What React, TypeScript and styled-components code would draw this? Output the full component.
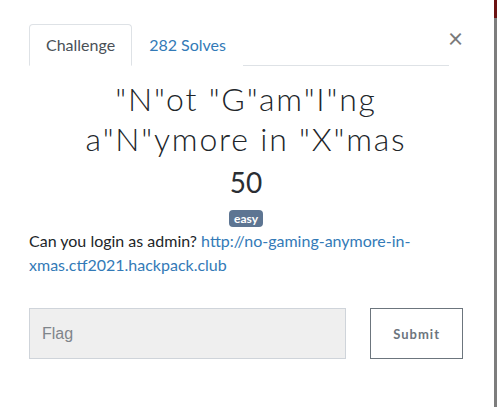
import React from "react";
import styled, { createGlobalStyle } from "styled-components";

const Global = createGlobalStyle`
  html, body { margin: 0; padding: 0; background: #fff; }
  body { font-family: Lato, "Noto Sans", sans-serif; color: #212529; }
  * { box-sizing: border-box; }
`;

const Page = styled.div`
  display: flex;
  height: 407px;
  overflow: hidden;
`;

const Main = styled.div`
  flex: 1;
  padding: 24px 0 0 29px;
`;

const Content = styled.div`
  width: 434px;
`;

const Scrollbar = styled.div`
  width: 3px;
  display: flex;
  flex-direction: column;
  background: #7d7d7d;
`;

const ScrollTop = styled.div`
  height: 18px;
  background: #6b1212;
`;

const Header = styled.div`
  display: flex;
  align-items: flex-start;
`;

const Tabs = styled.div`
  display: flex;
  width: 420px;
  border-bottom: 1px solid #dee2e6;
`;

const Tab = styled.a<{ $active?: boolean }>`
  display: block;
  padding: 8px 16px;
  font-size: 16px;
  line-height: 24px;
  margin-bottom: -1px;
  border: 1px solid ${(p) => (p.$active ? "#dee2e6" : "transparent")};
  border-bottom-color: ${(p) => (p.$active ? "#fff" : "transparent")};
  border-radius: 4px 4px 0 0;
  color: ${(p) => (p.$active ? "#495057" : "#337ab7")};
  background: #fff;
  text-decoration: none;
`;

const Close = styled.button`
  border: 0;
  background: none;
  padding: 0;
  margin: 2px 0 0 0;
  width: 14px;
  display: flex;
  justify-content: flex-end;
  font-family: Lato, sans-serif;
  font-size: 26px;
  line-height: 24px;
  font-weight: 400;
  color: #7a7a7a;
  cursor: pointer;
`;

const Title = styled.h2`
  margin: 13px 0 0;
  text-align: center;
  font-weight: 300;
  font-size: 32px;
  line-height: 40px;
  letter-spacing: 1.8px;
  color: #212529;
`;

const Value = styled.h3`
  margin: 6px 0 0;
  text-align: center;
  font-weight: 400;
  font-size: 28px;
  line-height: 34px;
  color: #2a2e33;
`;

const BadgeRow = styled.div`
  display: flex;
  justify-content: center;
  margin-top: 11px;
`;

const Badge = styled.span`
  display: inline-block;
  background: #5d7592;
  color: #fff;
  font-weight: 700;
  font-size: 12px;
  line-height: 12px;
  padding: 3px 5px 2px;
  border-radius: 4px;
`;

const Desc = styled.p`
  margin: 2px 0 0;
  font-size: 16px;
  line-height: 24px;
  color: #212529;
`;

const Link = styled.a`
  color: #337ab7;
  text-decoration: none;
`;

const FormRow = styled.form`
  display: flex;
  gap: 24px;
  margin-top: 31px;
`;

const FlagInput = styled.input`
  width: 318px;
  height: 51px;
  background: #efefef;
  border: 1px solid #cfd4da;
  padding: 0 12px;
  font-family: "Liberation Sans", Arial, sans-serif;
  font-size: 16px;
  color: #495057;
  outline: none;
  &::placeholder { color: #7f858b; }
`;

const SubmitButton = styled.button`
  width: 93px;
  height: 51px;
  background: #fff;
  border: 1px solid #6c757d;
  font-family: Lato, sans-serif;
  font-weight: 700;
  font-size: 13px;
  letter-spacing: 1px;
  color: #6c757d;
  cursor: pointer;
`;

export default function App() {
  return (
    <Page>
      <Global />
      <Main>
        <Content>
          <Header>
            <Tabs>
              <Tab $active>Challenge</Tab>
              <Tab>282 Solves</Tab>
            </Tabs>
            <Close aria-label="Close">×</Close>
          </Header>
          <Title>
            "N"ot "G"am"I"ng
            <br />
            a"N"ymore in "X"mas
          </Title>
          <Value>50</Value>
          <BadgeRow>
            <Badge>easy</Badge>
          </BadgeRow>
          <Desc>
            Can you login as admin?{" "}
            <Link href="#">http://no-gaming-anymore-in-xmas.ctf2021.hackpack.club</Link>
          </Desc>
          <FormRow onSubmit={(e) => e.preventDefault()}>
            <FlagInput placeholder="Flag" />
            <SubmitButton type="submit">Submit</SubmitButton>
          </FormRow>
        </Content>
      </Main>
      <Scrollbar>
        <ScrollTop />
      </Scrollbar>
    </Page>
  );
}
